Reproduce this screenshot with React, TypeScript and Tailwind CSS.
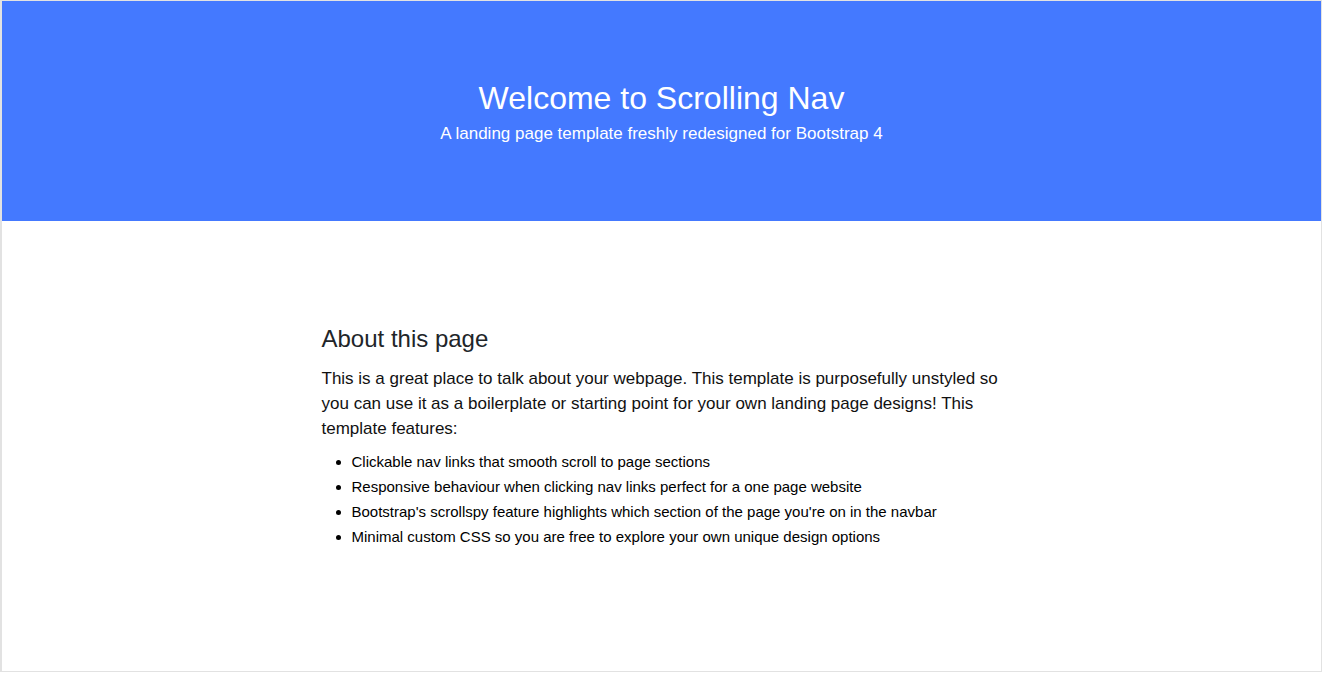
const features = [
  "Clickable nav links that smooth scroll to page sections",
  "Responsive behaviour when clicking nav links perfect for a one page website",
  "Bootstrap's scrollspy feature highlights which section of the page you're on in the navbar",
  "Minimal custom CSS so you are free to explore your own unique design options",
];

export default function App() {
  return (
    <div className="w-[1322px] h-[672px] box-border border-l-2 border-t border-r border-b border-[#e2e2e2] bg-white font-['Liberation_Sans',Arial,sans-serif] overflow-hidden">
      {/* Header */}
      <header className="h-[220px] bg-[#4479ff] text-white text-center pt-[78px]">
        <h1 className="text-[32px] leading-[38px] font-normal">
          Welcome to Scrolling Nav
        </h1>
        <p className="mt-[4px] text-[17px] leading-[26px]">
          A landing page template freshly redesigned for Bootstrap 4
        </p>
      </header>

      {/* About */}
      <section className="pt-[103px]">
        <div className="w-[680px] mx-auto">
          <h2 className="text-[24px] leading-[29px] text-[#212529] font-normal">
            About this page
          </h2>
          <p className="mt-[13px] text-[17px] leading-[25px] text-[#111]">
            This is a great place to talk about your webpage. This template is
            purposefully unstyled so you can use it as a boilerplate or starting
            point for your own landing page designs! This template features:
          </p>
          <ul className="mt-[8px] list-disc pl-[30px] text-[15px] leading-[25px] text-black">
            {features.map((f) => (
              <li key={f}>{f}</li>
            ))}
          </ul>
        </div>
      </section>
    </div>
  );
}
